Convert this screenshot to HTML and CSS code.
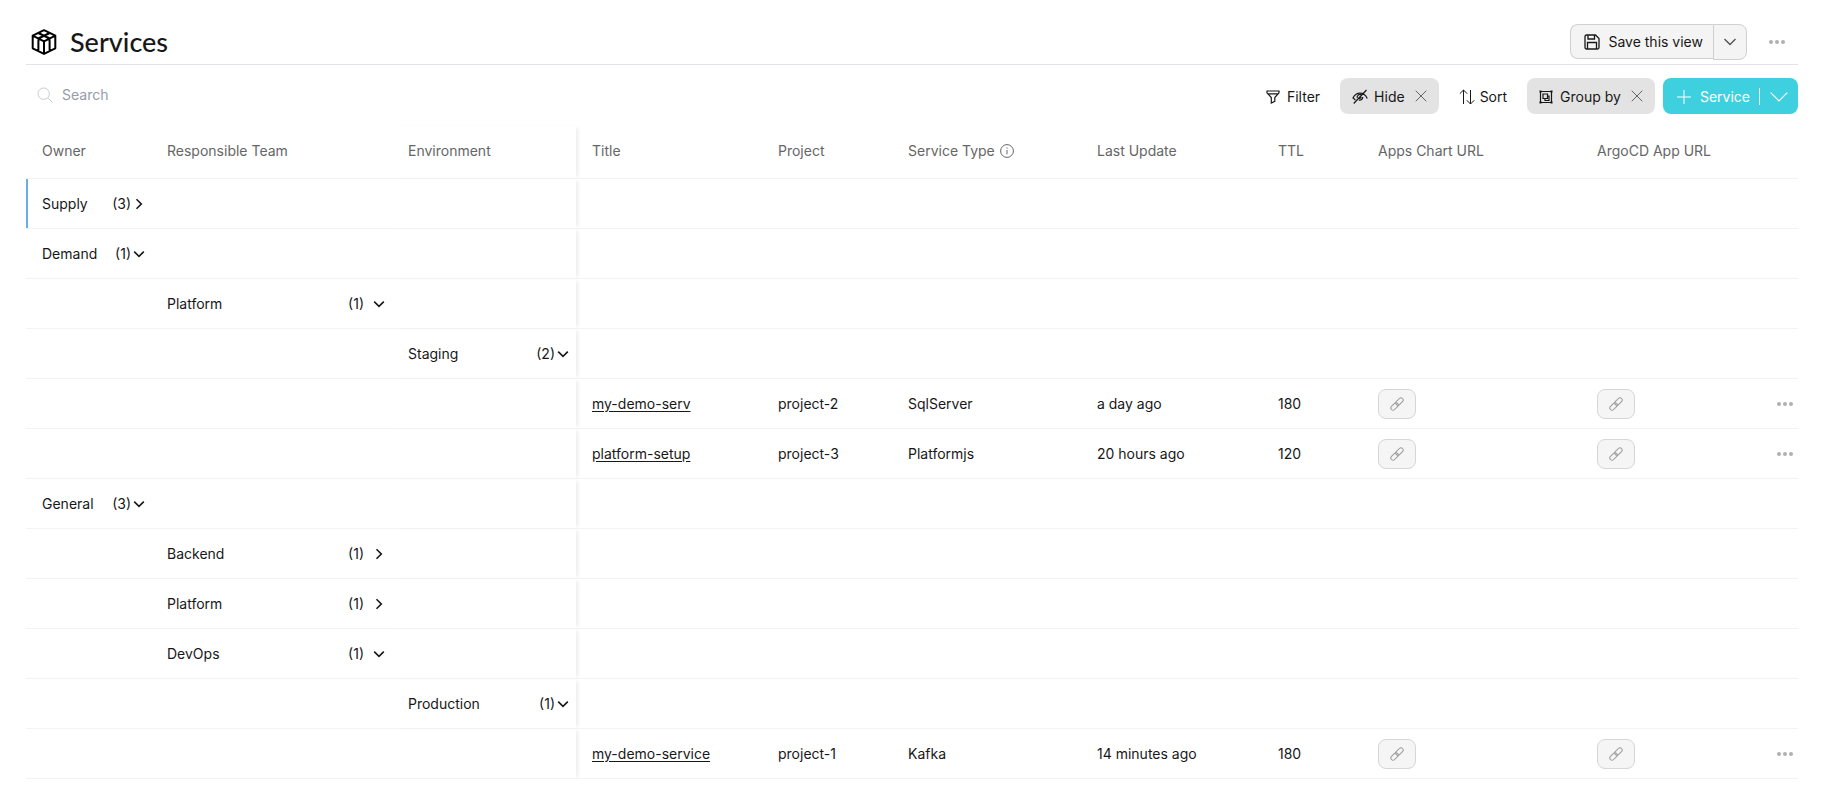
FILE: index.html
```html
<!DOCTYPE html>
<html lang="en">
<head>
<meta charset="utf-8">
<title>Services</title>
<link rel="stylesheet" href="styles.css">
</head>
<body>
<svg class="sprite" aria-hidden="true">
  <symbol id="right" viewBox="0 0 14 14"><path d="M4.5 2.2 9.3 7l-4.8 4.8"/></symbol>
  <symbol id="down" viewBox="0 0 14 14"><path d="M2.2 4.6 7 9.4l4.8-4.8"/></symbol>
  <symbol id="close" viewBox="0 0 12 12"><path d="m.7.7 10.6 10.6M11.3.7.7 11.3"/></symbol>
  <symbol id="dots" viewBox="0 0 18 6"><circle cx="3" cy="3" r="2"/><circle cx="9" cy="3" r="2"/><circle cx="15" cy="3" r="2"/></symbol>
  <symbol id="link" viewBox="0 0 14 14"><g transform="rotate(-45 7 7)"><rect x="-.8" y="4.8" width="8.6" height="4.4" rx="2.2"/><rect x="6.2" y="4.8" width="8.6" height="4.4" rx="2.2"/></g></symbol>
</svg>
<main class="page">
  <header class="page-header">
    <svg class="logo" viewBox="0 0 26 26"><path d="M13 1.2 24.3 6.7v12.6L13 24.9 1.7 19.3V6.7zM1.7 6.7 13 12.3l11.3-5.6M13 12.3v12.6M7.3 4 18.6 9.5v12.6M18.7 4 7.4 9.5v12.6"/></svg>
    <h1 class="title">Services</h1>
    <div class="save-group">
      <button class="save" type="button">
        <svg class="icon-16" viewBox="0 0 16 16"><path d="M1 2.5A1.5 1.5 0 0 1 2.500 1h9L15 4.500v9a1.500 1.500 0 0 1-1.500 1.500h-11A1.500 1.500 0 0 1 1 13.500zM4 1v4h6.500V1M3.500 15V8.500h9V15"/></svg>
        Save this view
      </button>
      <button class="save-more" type="button" aria-label="Save options"><svg class="icon-16" viewBox="0 0 16 16"><path d="m2.500 5 5.500 5.500L13.500 5"/></svg></button>
    </div>
    <button class="more" type="button" aria-label="Page options"><svg class="dots"><use href="#dots"/></svg></button>
  </header>
  <div class="toolbar">
    <label class="search">
      <svg class="icon-16" viewBox="0 0 16 16"><circle cx="6.700" cy="6.700" r="5.700"/><path d="m10.800 10.800 4.700 4.700"/></svg>
      <input type="text" placeholder="Search" aria-label="Search">
    </label>
    <button class="tool" type="button">
      <svg class="icon-14" viewBox="0 0 14 14"><path d="M1 1h12v1.800L8.800 7.500v3.800L5.300 13V7.500L1 2.800zM1.500 3.800h11"/></svg>Filter
    </button>
    <div class="chip">
      <button class="chip-label hide" type="button">
        <svg class="icon-16" viewBox="0 0 16 16"><path d="M.7 9.500C4 2.300 12 2.300 15.300 9.500M14.500 1 1.700 14.500M5.300 9a2.800 2.800 0 0 1 4.200-3.200M10.700 8a2.800 2.800 0 0 1-3.800 2.900M3.400 11C2.200 10.200 1.500 9 1 8.500M7 8.500a1 1 0 1 0 2-.5"/></svg>Hide
      </button>
      <button class="chip-close" type="button" aria-label="Clear hidden columns"><svg class="icon-12"><use href="#close"/></svg></button>
    </div>
    <button class="tool sort" type="button">
      <svg class="icon-16" viewBox="0 0 16 16"><path d="M4.500 15V1M.8 4.700 4.500 1l3.700 3.700M11.500 1v14M7.800 11.300l3.700 3.700 3.700-3.700"/></svg>Sort
    </button>
    <div class="chip">
      <button class="chip-label" type="button">
        <svg class="icon-14" viewBox="0 0 14 14"><path d="M1.500 1.500h11v11h-11zM4 4h4.500v4.500H4zM8.500 6H10v4.500H6V8.500"/><path d="M.5.5h2v2h-2zM11.500.5h2v2h-2zM.5 11.500h2v2h-2zM11.500 11.500h2v2h-2z" fill="currentColor" stroke="none"/></svg>Group by
      </button>
      <button class="chip-close" type="button" aria-label="Clear grouping"><svg class="icon-12"><use href="#close"/></svg></button>
    </div>
    <button class="create" type="button">
      <svg class="icon-14" viewBox="0 0 14 14"><path d="M7 0v14M0 7h14"/></svg>
      <span class="create-label">Service</span>
      <span class="divider"></span>
      <svg class="wide-down" viewBox="0 0 18 10"><path d="m.7.7 8.300 8.300L17.300.7"/></svg>
    </button>
  </div>
  <table class="grid">
    <colgroup><col class="c-owner"><col class="c-team"><col class="c-env"><col class="c-title"><col class="c-project"><col class="c-type"><col class="c-update"><col class="c-ttl"><col class="c-apps"><col></colgroup>
    <thead>
      <tr><th>Owner</th><th>Responsible Team</th><th class="pin">Environment</th><th>Title</th><th>Project</th><th><span class="with-info">Service Type <svg class="icon-14" viewBox="0 0 14 14"><circle cx="7" cy="7" r="6.400"/><path d="M7 6v4.300M7 3.500v1.200"/></svg></span></th><th>Last Update</th><th>TTL</th><th>Apps Chart URL</th><th>ArgoCD App URL</th></tr>
    </thead>
    <tbody>
      <tr class="active"><td><div class="group">Supply<button type="button">(3)<svg class="icon-14"><use href="#right"/></svg></button></div></td><td></td><td class="pin"></td><td colspan="7"></td></tr>
      <tr><td><div class="group">Demand<button type="button">(1)<svg class="icon-14"><use href="#down"/></svg></button></div></td><td></td><td class="pin"></td><td colspan="7"></td></tr>
      <tr><td></td><td><div class="group team">Platform<button type="button">(1)<svg class="icon-14"><use href="#down"/></svg></button></div></td><td class="pin"></td><td colspan="7"></td></tr>
      <tr><td></td><td></td><td class="pin"><div class="group env">Staging<button type="button">(2)<svg class="icon-14"><use href="#down"/></svg></button></div></td><td colspan="7"></td></tr>
      <tr><td></td><td></td><td class="pin"></td><td><a href="#">my-demo-serv</a></td><td>project-2</td><td>SqlServer</td><td>a day ago</td><td>180</td><td><button class="url" type="button" aria-label="Open link"><svg class="icon-14"><use href="#link"/></svg></button></td><td><div class="last"><button class="url" type="button" aria-label="Open link"><svg class="icon-14"><use href="#link"/></svg></button><button class="row-more" type="button" aria-label="Row options"><svg class="dots"><use href="#dots"/></svg></button></div></td></tr>
      <tr><td></td><td></td><td class="pin"></td><td><a href="#">platform-setup</a></td><td>project-3</td><td>Platformjs</td><td>20 hours ago</td><td>120</td><td><button class="url" type="button" aria-label="Open link"><svg class="icon-14"><use href="#link"/></svg></button></td><td><div class="last"><button class="url" type="button" aria-label="Open link"><svg class="icon-14"><use href="#link"/></svg></button><button class="row-more" type="button" aria-label="Row options"><svg class="dots"><use href="#dots"/></svg></button></div></td></tr>
      <tr><td><div class="group">General<button type="button">(3)<svg class="icon-14"><use href="#down"/></svg></button></div></td><td></td><td class="pin"></td><td colspan="7"></td></tr>
      <tr><td></td><td><div class="group team">Backend<button type="button">(1)<svg class="icon-14"><use href="#right"/></svg></button></div></td><td class="pin"></td><td colspan="7"></td></tr>
      <tr><td></td><td><div class="group team">Platform<button type="button">(1)<svg class="icon-14"><use href="#right"/></svg></button></div></td><td class="pin"></td><td colspan="7"></td></tr>
      <tr><td></td><td><div class="group team">DevOps<button type="button">(1)<svg class="icon-14"><use href="#down"/></svg></button></div></td><td class="pin"></td><td colspan="7"></td></tr>
      <tr><td></td><td></td><td class="pin"><div class="group env">Production<button type="button">(1)<svg class="icon-14"><use href="#down"/></svg></button></div></td><td colspan="7"></td></tr>
      <tr><td></td><td></td><td class="pin"></td><td><a href="#">my-demo-service</a></td><td>project-1</td><td>Kafka</td><td>14 minutes ago</td><td>180</td><td><button class="url" type="button" aria-label="Open link"><svg class="icon-14"><use href="#link"/></svg></button></td><td><div class="last"><button class="url" type="button" aria-label="Open link"><svg class="icon-14"><use href="#link"/></svg></button><button class="row-more" type="button" aria-label="Row options"><svg class="dots"><use href="#dots"/></svg></button></div></td></tr>
    </tbody>
  </table>
</main>
</body>
</html>
```
FILE: styles.css
```css
* { box-sizing: border-box; }
body {
  margin: 0;
  background: #fff;
  color: #181818;
  font: 14px/20px Inter, "Liberation Sans", sans-serif;
}
.sprite { position: absolute; width: 0; height: 0; }
svg { display: block; flex: none; fill: none; stroke: currentColor; stroke-width: 1; }
button { display: flex; align-items: center; margin: 0; padding: 0; border: 0; background: none; color: inherit; font: inherit; }
.icon-12 { width: 12px; height: 12px; }
.icon-14 { width: 14px; height: 14px; }
.icon-16 { width: 16px; height: 16px; }
.dots { width: 18px; height: 6px; fill: #b0b0b0; stroke: none; }

.page { padding: 0 28px 0 26px; }
.page-header {
  display: flex;
  align-items: center;
  height: 65px;
  padding: 20px 12px 0 5px;
  border-bottom: 1px solid #e2e2e8;
}
.logo { width: 26px; height: 26px; color: #000; stroke-width: 2; stroke-linejoin: round; }
.title { margin: 0 auto 0 13px; font: 500 27px/32px Lato, sans-serif; }
.save-group { display: flex; align-items: flex-start; }
.save, .save-more { height: 35px; border: 1px solid #d0d0d0; background: #f4f4f4; }
.save { gap: 8px; padding: 0 10px 0 13px; border-right: 0; border-radius: 8px 0 0 8px; }
.save-more { height: 36px; padding: 0 8px; border-radius: 0 8px 8px 0; }
.save svg { stroke-width: 1.3; }
.save-more svg { stroke-width: 1.4; color: #555; }
.more { margin-left: 21px; }

.toolbar { display: flex; align-items: center; padding: 13px 0 12px; }
.search { display: flex; flex: 1; align-items: center; gap: 9px; padding: 0 0 2px 11px; color: #ccc; }
.search input { flex: 1; border: 0; padding: 0; outline: 0; font: inherit; color: #181818; }
.search input::placeholder { color: #969cab; opacity: 1; }
.tool, .chip-label, .create { padding-top: 1px; }
.tool { gap: 7px; margin-right: 20px; }
.tool .icon-14, .chip-label svg { stroke-width: 1.2; }
.sort { gap: 5px; margin: 0 20px; }
.chip { display: flex; height: 36px; padding: 0 12px; gap: 10px; border-radius: 8px; background: #e3e3e3; }
.chip-label { gap: 7px; }
.hide { gap: 6px; }
.chip-close { color: #666; }
.create { height: 36px; margin-left: 8px; padding: 1px 10px 0 14px; border-radius: 8px; background: #3ed0de; color: #fff; }
.create-label { margin: 0 9px; }
.divider { width: 1px; height: 17px; margin-right: 10px; background: #fff; }
.wide-down { width: 18px; height: 10px; stroke-width: 1.2; }

.grid { width: 100%; table-layout: fixed; border-collapse: separate; border-spacing: 0; }
.c-owner { width: 125px; }
.c-team { width: 241px; }
.c-env { width: 184px; }
.c-title { width: 186px; }
.c-project { width: 130px; }
.c-type { width: 189px; }
.c-update { width: 181px; }
.c-ttl { width: 100px; }
.c-apps { width: 219px; }
.grid th, .grid td { height: 50px; padding: 0 0 0 16px; border-bottom: 1px solid #f3f3f3; text-align: left; vertical-align: middle; }
.grid th { height: 53px; padding-bottom: 2px; color: #666; font-weight: 400; }
.grid a { color: inherit; text-underline-offset: 2px; }
.grid .pin { box-shadow: 4px 0 4px -2px #ececec; }
.active td:first-child { box-shadow: inset 2px 0 #66b0e8; }
.with-info { display: flex; align-items: center; gap: 5px; }
.group { display: flex; justify-content: space-between; padding-right: 5px; }
.group button { gap: 1px; }
.group svg { stroke-width: 1.6; }
.group.team { padding-right: 6px; }
.team button { gap: 8px; }
.group.env { padding-right: 6px; }
.group.env button { gap: 1px; }
.url { justify-content: center; width: 38px; height: 30px; border: 1px solid #d6d6d6; border-radius: 8px; background: #f5f5f5; color: #999; }
.last { display: flex; align-items: center; justify-content: space-between; padding-right: 4px; }
```
